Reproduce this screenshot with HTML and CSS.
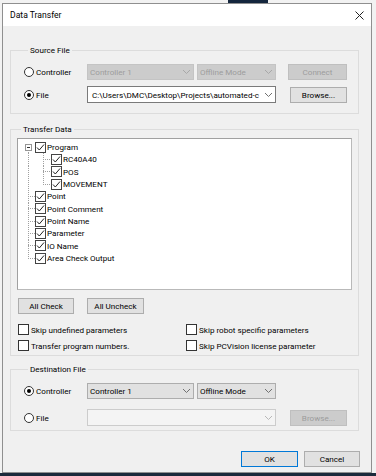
FILE: index.html
```html
<!DOCTYPE html>
<html lang="en">
<head>
  <meta charset="UTF-8">
  <meta name="viewport" content="width=device-width, initial-scale=1.0">
  <title>Data Transfer</title>
  <link rel="stylesheet" href="styles.css">
</head>
<body>
  <div class="dialog">
    <div class="titleBar">
      <span class="title">Data Transfer</span>
      <svg class="closeIcon" width="9" height="9" viewBox="0 0 9 9"><path d="M0.5 0.5L8.5 8.5M8.5 0.5L0.5 8.5"/></svg>
    </div>

    <div class="dlgBody">
      <!-- source -->
      <div class="group srcGroup">
        <div class="legend">Source File</div>
        <div class="row row1">
          <div class="opt"><span class="radio"></span>Controller</div>
          <div class="combo dis cCtrl"><span>Controller 1</span><svg class="chev" width="7" height="4" viewBox="0 0 7 4"><path d="M0 0L3.5 3.5L7 0"/></svg></div>
          <div class="combo dis cMode"><span>Offline Mode</span><svg class="chev" width="7" height="4" viewBox="0 0 7 4"><path d="M0 0L3.5 3.5L7 0"/></svg></div>
          <div class="btn dis bConnect">Connect</div>
        </div>
        <div class="row row2">
          <div class="opt"><span class="radio on"></span>File</div>
          <div class="combo edit cPath"><span class="path">C:\Users\DMC\Desktop\Projects\automated-c</span><svg class="chev" width="7" height="4" viewBox="0 0 7 4"><path d="M0 0L3.5 3.5L7 0"/></svg></div>
          <div class="btn bBrowse">Browse...</div>
        </div>
      </div>

      <!-- transfer data -->
      <div class="group xferGroup">
        <div class="legend">Transfer Data</div>
        <div class="tree">
          <div class="node"><span class="slot first"><span class="expander"></span></span><span class="chk"><svg width="9" height="9" viewBox="0 0 9 9"><path d="M1 4.5L3.3 7L8 1.5"/></svg></span>Program</div>
          <div class="node"><span class="slot pass"></span><span class="slot2 tee"></span><span class="chk"><svg width="9" height="9" viewBox="0 0 9 9"><path d="M1 4.5L3.3 7L8 1.5"/></svg></span>RC40A40</div>
          <div class="node"><span class="slot pass"></span><span class="slot2 tee"></span><span class="chk"><svg width="9" height="9" viewBox="0 0 9 9"><path d="M1 4.5L3.3 7L8 1.5"/></svg></span>POS</div>
          <div class="node"><span class="slot pass"></span><span class="slot2 elbow"></span><span class="chk"><svg width="9" height="9" viewBox="0 0 9 9"><path d="M1 4.5L3.3 7L8 1.5"/></svg></span>MOVEMENT</div>
          <div class="node"><span class="slot tee"></span><span class="chk"><svg width="9" height="9" viewBox="0 0 9 9"><path d="M1 4.5L3.3 7L8 1.5"/></svg></span>Point</div>
          <div class="node"><span class="slot tee"></span><span class="chk"><svg width="9" height="9" viewBox="0 0 9 9"><path d="M1 4.5L3.3 7L8 1.5"/></svg></span>Point Comment</div>
          <div class="node"><span class="slot tee"></span><span class="chk"><svg width="9" height="9" viewBox="0 0 9 9"><path d="M1 4.5L3.3 7L8 1.5"/></svg></span>Point Name</div>
          <div class="node"><span class="slot tee"></span><span class="chk"><svg width="9" height="9" viewBox="0 0 9 9"><path d="M1 4.5L3.3 7L8 1.5"/></svg></span>Parameter</div>
          <div class="node"><span class="slot tee"></span><span class="chk"><svg width="9" height="9" viewBox="0 0 9 9"><path d="M1 4.5L3.3 7L8 1.5"/></svg></span>IO Name</div>
          <div class="node"><span class="slot elbow"></span><span class="chk"><svg width="9" height="9" viewBox="0 0 9 9"><path d="M1 4.5L3.3 7L8 1.5"/></svg></span>Area Check Output</div>
        </div>
        <div class="btnRow">
          <div class="btn bAll">All Check</div>
          <div class="btn bNone">All Uncheck</div>
        </div>
        <div class="opts">
          <div class="cb"><span class="box"></span>Skip undefined parameters</div>
          <div class="cb"><span class="box"></span>Skip robot specific parameters</div>
          <div class="cb"><span class="box"></span>Transfer program numbers.</div>
          <div class="cb"><span class="box"></span>Skip PCVision license parameter</div>
        </div>
      </div>

      <!-- destination -->
      <div class="group dstGroup">
        <div class="legend">Destination File</div>
        <div class="row row1">
          <div class="opt"><span class="radio on"></span>Controller</div>
          <div class="combo cCtrl"><span>Controller 1</span><svg class="chev" width="7" height="4" viewBox="0 0 7 4"><path d="M0 0L3.5 3.5L7 0"/></svg></div>
          <div class="combo cMode"><span>Offline Mode</span><svg class="chev" width="7" height="4" viewBox="0 0 7 4"><path d="M0 0L3.5 3.5L7 0"/></svg></div>
        </div>
        <div class="row row2">
          <div class="opt"><span class="radio"></span>File</div>
          <div class="combo editDis cPath"><span class="path"></span><svg class="chev" width="7" height="4" viewBox="0 0 7 4"><path d="M0 0L3.5 3.5L7 0"/></svg></div>
          <div class="btn dis bBrowse">Browse...</div>
        </div>
      </div>

      <div class="footer">
        <div class="btn bOk">OK</div>
        <div class="btn bCancel">Cancel</div>
      </div>
    </div>
  </div>
</body>
</html>
```

FILE: styles.css
```css
body{
  margin: 0;
  width: 376px;
  height: 476px;
  overflow: hidden;
  font-family: "Segoe UI", Roboto, "Liberation Sans", sans-serif;
  font-size: 8.1px;
  color: #000;
  background:
    linear-gradient(#1b2a3b, #1b2a3b) 0 473px / 100% 3px no-repeat,
    linear-gradient(#14263d, #14263d) 228px 0 / 40px 3px no-repeat,
    #f2f2f2;
}

.dialog{
  margin: 3px 0 0 2px;
  width: 368px;
  height: 468px;
  border: 1px solid #8f8f8f;
  background: #f0f0f0;
  display: flex;
  flex-direction: column;
}

.titleBar{
  height: 22px;
  flex: none;
  background: #fff;
  display: flex;
  align-items: center;
  justify-content: space-between;
  padding: 0 7px 0 7px;
}
.title{font-size: 8.6px;}
.closeIcon path{stroke: #222; stroke-width: 1; fill: none;}

.dlgBody{
  flex: 1;
  padding: 24px 12px 0 7px;
  display: flex;
  flex-direction: column;
}

/* group boxes */
.group{
  border: 1px solid #dcdcdc;
  display: flex;
  flex-direction: column;
}
.legend{
  align-self: flex-start;
  margin: -6px 0 0 4px;
  padding: 0 2px;
  height: 11px;
  line-height: 11px;
  background: #f0f0f0;
}

.row{display: flex; align-items: center; height: 17px;}
.opt{width: 63px; flex: none; display: flex; align-items: center; gap: 2px;}

.radio{
  box-sizing: border-box;
  width: 10px;
  height: 10px;
  border: 1px solid #333;
  border-radius: 50%;
  background: #fff;
  display: flex;
  align-items: center;
  justify-content: center;
}
.radio.on::after{content: ""; width: 4px; height: 4px; border-radius: 50%; background: #000;}

.combo{
  box-sizing: border-box;
  height: 16px;
  flex: none;
  display: flex;
  align-items: center;
  justify-content: space-between;
  padding: 0 3px 0 2px;
  border: 1px solid #adadad;
  background: #e1e1e1;
  white-space: nowrap;
  overflow: hidden;
}
.combo .chev{flex: none; margin-left: 4px;}
.chev path{fill: none; stroke: #707070; stroke-width: 1;}
.combo.dis{background: #cccccc; border-color: #c4c4c4; color: #9c9c9c;}
.combo.dis .chev path{stroke: #a8a8a8;}
.combo.edit{height: 17px; background: #fff; border-color: #7a7a7a;}
.combo.editDis{height: 17px; background: #f4f4f4; border-color: #cccccc;}
.combo.editDis .chev path{stroke: #b8b8b8;}
.path{flex: 1; min-width: 0; overflow: hidden; padding-left: 2px;}

.cCtrl{width: 107px;}
.cMode{width: 79px; margin-left: 3px;}
.cPath{width: 189px;}

.btn{
  box-sizing: border-box;
  height: 16px;
  flex: none;
  border: 1px solid #adadad;
  background: #e1e1e1;
  display: flex;
  align-items: center;
  justify-content: center;
}
.btn.dis{background: #cccccc; border-color: #bfbfbf; color: #9c9c9c;}
.bConnect{width: 59px; margin-left: 12px;}
.bBrowse{width: 57px; margin-left: 14px;}

.srcGroup{padding: 0 0 10px 13px;}
.srcGroup .row1{margin-top: 7px;}
.srcGroup .row2{margin-top: 6px;}

/* tree */
.xferGroup{margin-top: 15px; padding: 0 6px 4px 6px;}
.tree{
  box-sizing: border-box;
  margin-top: 3px;
  height: 152px;
  border: 1px solid #a0a0a0;
  border-right-color: #b9b9b9;
  border-bottom-color: #b9b9b9;
  background: #fff;
  padding: 2px 0 0 6px;
}
.node{display: flex; align-items: center; height: 12.33px;}
.slot{width: 11px; height: 100%; flex: none; display: flex; align-items: center;}
.slot2{width: 16px; height: 100%; flex: none;}

.slot.pass{background: repeating-linear-gradient(to bottom, #a0a0a0 0 1px, transparent 1px 2px) 4px 0 / 1px 100% no-repeat;}
.slot.tee{
  background:
    repeating-linear-gradient(to bottom, #a0a0a0 0 1px, transparent 1px 2px) 4px 0 / 1px 100% no-repeat,
    repeating-linear-gradient(to right, #a0a0a0 0 1px, transparent 1px 2px) 4px 50% / 7px 1px no-repeat;
}
.slot.elbow{
  background:
    repeating-linear-gradient(to bottom, #a0a0a0 0 1px, transparent 1px 2px) 4px 0 / 1px 50% no-repeat,
    repeating-linear-gradient(to right, #a0a0a0 0 1px, transparent 1px 2px) 4px 50% / 7px 1px no-repeat;
}
.slot.first{background: repeating-linear-gradient(to bottom, #a0a0a0 0 1px, transparent 1px 2px) 4px 100% / 1px 3px no-repeat;}
.slot2.tee{
  background:
    repeating-linear-gradient(to bottom, #a0a0a0 0 1px, transparent 1px 2px) 8px 0 / 1px 100% no-repeat,
    repeating-linear-gradient(to right, #a0a0a0 0 1px, transparent 1px 2px) 8px 50% / 8px 1px no-repeat;
}
.slot2.elbow{
  background:
    repeating-linear-gradient(to bottom, #a0a0a0 0 1px, transparent 1px 2px) 8px 0 / 1px 50% no-repeat,
    repeating-linear-gradient(to right, #a0a0a0 0 1px, transparent 1px 2px) 8px 50% / 8px 1px no-repeat;
}

.expander{
  box-sizing: border-box;
  width: 7px;
  height: 7px;
  margin-left: 1px;
  border: 1px solid #969696;
  background: linear-gradient(#333, #333) center / 3px 1px no-repeat, #fff;
}

.chk{
  box-sizing: border-box;
  width: 11px;
  height: 11px;
  flex: none;
  margin-right: 1px;
  border: 1px solid #444;
  background: #fff;
  display: flex;
  align-items: center;
  justify-content: center;
}
.chk path{fill: none; stroke: #222; stroke-width: 1;}

.btnRow{display: flex; gap: 13px; margin: 8px 0 0 1px;}
.bAll{width: 56px;}
.bNone{width: 57px;}

.opts{
  display: grid;
  grid-template-columns: 168px auto;
  row-gap: 5px;
  margin: 10px 0 0 1px;
}
.cb{display: flex; align-items: center; gap: 2px; height: 11px;}
.box{
  box-sizing: border-box;
  width: 11px;
  height: 11px;
  flex: none;
  border: 1px solid #333;
  background: #fff;
}

.dstGroup{margin-top: 13px; padding: 0 0 4px 13px;}
.dstGroup .row1{margin-top: 8px; height: 16px;}
.dstGroup .row2{margin-top: 10px;}

.footer{
  display: flex;
  justify-content: flex-end;
  gap: 6px;
  margin: 20px -1px 0 0;
}
.bOk{width: 57px; border-color: #0078d7;}
.bCancel{width: 56px;}
```
